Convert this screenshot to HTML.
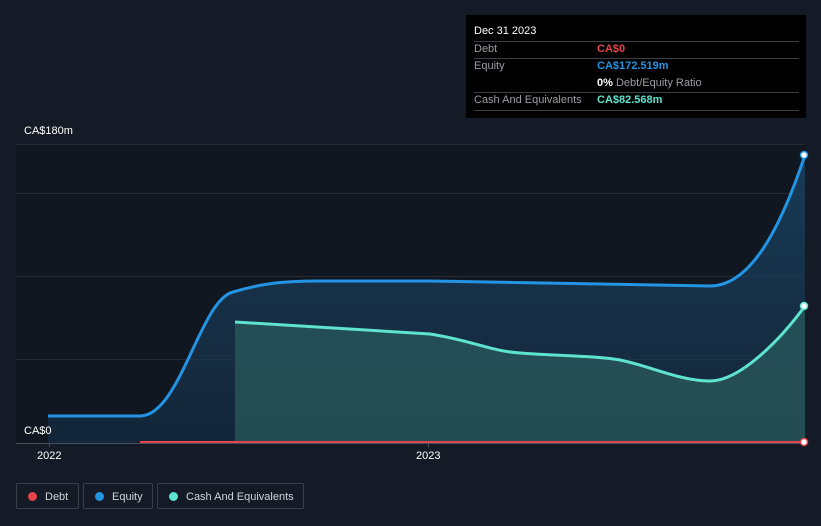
<!DOCTYPE html><html><head><style>
body{margin:0;width:821px;height:526px;background:#151b26;font-family:"Liberation Sans",sans-serif;overflow:hidden;position:relative}
.t{position:absolute;font-size:11px;color:#fff}
.tt{position:absolute;left:466px;top:15px;width:340px;height:103px;background:#000}
.tt div{position:absolute;font-size:11px}
.ln{position:absolute;left:8px;width:325px;height:1px;background:#3a3f47}
.lg{position:absolute;top:483px;height:26px;border:1px solid #3a3f47;border-radius:2px;color:#d0d3d8;font-size:11px;line-height:26px;box-sizing:border-box}
.lg i{position:absolute;left:11px;top:8px;width:9px;height:9px;border-radius:50%}
</style></head><body>
<svg width="821" height="526" style="position:absolute;left:0;top:0">
<defs><linearGradient id="g" x1="0" y1="0" x2="0" y2="1"><stop offset="0" stop-color="#1b4a6e" stop-opacity=".7"/><stop offset="1" stop-color="#163049" stop-opacity=".6"/></linearGradient></defs>
<rect x="16" y="144" width="789" height="299" fill="#111720"/>
<g stroke="#262c36" stroke-width="1"><line x1="16" y1="144.5" x2="805" y2="144.5"/><line x1="16" y1="193.5" x2="805" y2="193.5"/><line x1="16" y1="276.5" x2="805" y2="276.5"/><line x1="16" y1="359.5" x2="805" y2="359.5"/></g>
<path d="M48,416 L140,416 C180,416 200,300 233,292 C260,284 280,281 320,281 L430,281 L600,284 L710,286 C750,286 780,230 805,155 L805,443 L48,443 Z" fill="url(#g)"/>
<path d="M235,322 L430,334 C470,340 490,351 520,353 C560,356 600,356 620,360 C650,366 680,381 710,381 C740,381 780,340 805,306 L805,443 L235,443 Z" fill="#2a5a5c" fill-opacity=".75"/>
<path d="M48,416 L140,416 C180,416 200,300 233,292 C260,284 280,281 320,281 L430,281 L600,284 L710,286 C750,286 780,230 805,155" fill="none" stroke="#2394e3" stroke-width="3"/>
<path d="M235,322 L430,334 C470,340 490,351 520,353 C560,356 600,356 620,360 C650,366 680,381 710,381 C740,381 780,340 805,306" fill="none" stroke="#5ee3cf" stroke-width="3"/>
<line x1="16" y1="443.5" x2="805" y2="443.5" stroke="#4a505a"/>
<line x1="140" y1="442" x2="805" y2="442" stroke="#e3454a" stroke-width="2"/>
<line x1="49.5" y1="443" x2="49.5" y2="447" stroke="#4a505a"/><line x1="428.5" y1="443" x2="428.5" y2="447" stroke="#4a505a"/>
<circle cx="804" cy="155" r="3.5" fill="#fff" stroke="#2394e3" stroke-width="1.5"/>
<circle cx="804" cy="306" r="3.5" fill="#fff" stroke="#5ee3cf" stroke-width="1.5"/>
<circle cx="804" cy="442" r="3.5" fill="#fff" stroke="#e3454a" stroke-width="1.5"/>
</svg>
<div class="t" style="left:24px;top:125px">CA$180m</div>
<div class="t" style="left:24px;top:425px">CA$0</div>
<div class="t" style="left:37px;top:450px">2022</div>
<div class="t" style="left:416px;top:450px">2023</div>
<div class="tt">
<div style="left:8px;top:10px;color:#fff">Dec 31 2023</div>
<div class="ln" style="top:26px"></div>
<div style="left:8px;top:28px;color:#9a9ea5">Debt</div><div style="left:131px;top:28px;color:#e3454a;font-weight:bold">CA$0</div>
<div class="ln" style="top:43px"></div>
<div style="left:8px;top:45px;color:#9a9ea5">Equity</div><div style="left:131px;top:45px;color:#2394e3;font-weight:bold">CA$172.519m</div>
<div style="left:131px;top:62px;color:#9a9ea5"><b style="color:#fff">0%</b> Debt/Equity Ratio</div>
<div class="ln" style="top:77px"></div>
<div style="left:8px;top:79px;color:#9a9ea5">Cash And Equivalents</div><div style="left:131px;top:79px;color:#5ee3cf;font-weight:bold">CA$82.568m</div>
<div class="ln" style="top:95px"></div>
</div>
<div class="lg" style="left:16px;width:63px"><i style="background:#e3454a"></i><span style="margin-left:28px">Debt</span></div>
<div class="lg" style="left:83px;width:70px"><i style="background:#2394e3"></i><span style="margin-left:28px">Equity</span></div>
<div class="lg" style="left:157px;width:147px"><i style="background:#5ee3cf"></i><span style="margin-left:28px">Cash And Equivalents</span></div>
</body></html>
